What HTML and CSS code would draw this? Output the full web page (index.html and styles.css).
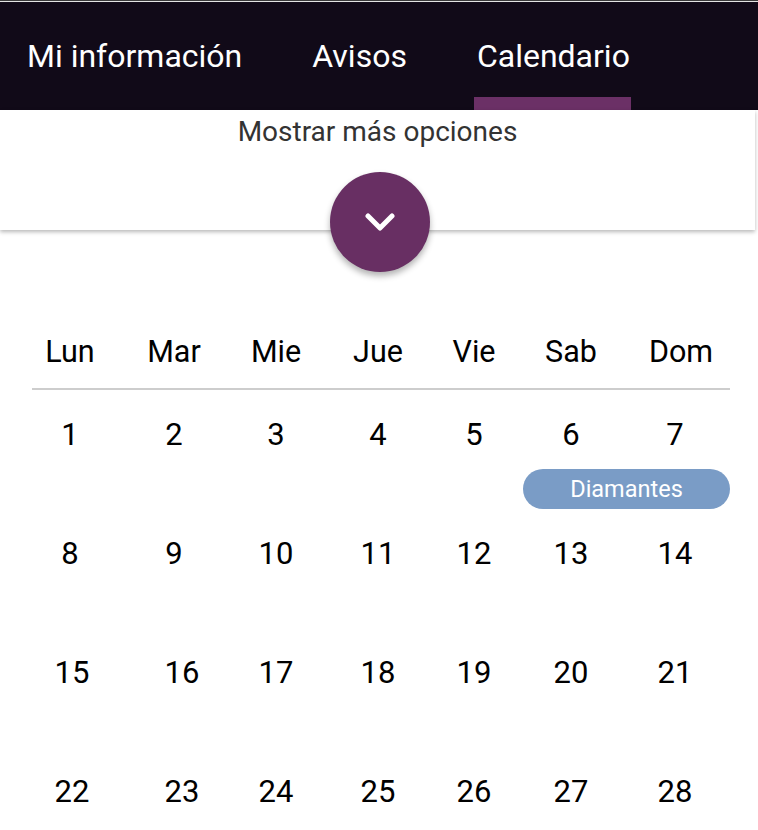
FILE: index.html
```html
<!DOCTYPE html>
<html lang="es">
<head>
<meta charset="utf-8">
<title>Calendario</title>
<link rel="stylesheet" href="styles.css">
</head>
<body>
<div class="frame-top"></div>
<header class="tabs">
  <div class="tab">Mi información</div>
  <div class="tab">Avisos</div>
  <div class="tab active">Calendario</div>
</header>
<section class="options">
  <div class="options-label">Mostrar más opciones</div>
  <button class="fab" aria-label="Mostrar más opciones">
    <svg width="30" height="20" viewBox="0 0 30 20"><path d="M3 3 L15 15 L27 3" fill="none" stroke="#fff" stroke-width="5" stroke-linecap="round" stroke-linejoin="round"/></svg>
  </button>
</section>
<main class="calendar">
  <div class="week head">
    <div>Lun</div><div>Mar</div><div>Mie</div><div>Jue</div><div>Vie</div><div>Sab</div><div>Dom</div>
  </div>
  <div class="week days">
    <div>1</div><div>2</div><div>3</div><div>4</div><div>5</div><div>6</div><div>7</div>
    <div class="event">Diamantes</div>
  </div>
  <div class="week days">
    <div>8</div><div>9</div><div>10</div><div>11</div><div>12</div><div>13</div><div>14</div>
  </div>
  <div class="week days wide">
    <div>15</div><div>16</div><div>17</div><div>18</div><div>19</div><div>20</div><div>21</div>
  </div>
  <div class="week days wide">
    <div>22</div><div>23</div><div>24</div><div>25</div><div>26</div><div>27</div><div>28</div>
  </div>
</main>
</body>
</html>
```
FILE: styles.css
```css
html, body {
  margin: 0;
  padding: 0;
  background: #fff;
  font-family: Roboto, "Liberation Sans", sans-serif;
  overflow: hidden;
}
.frame-top {
  height: 1px;
  border-top: 1px solid #3a3a3a;
  background: #e4e4e4;
}
.tabs {
  background: #110a18;
  height: 108px;
  display: flex;
  gap: 70px;
  padding-left: 27px;
  box-sizing: border-box;
}
.tab {
  color: #fff;
  font-size: 32px;
  line-height: 108px;
  position: relative;
}
.tab.active::after {
  content: "";
  position: absolute;
  left: -3px;
  right: -1px;
  bottom: 0;
  height: 13px;
  background: #6b3066;
}
.options {
  position: relative;
  height: 120px;
  width: 755px;
  background: #fff;
  box-shadow: 0 2px 4px rgba(0,0,0,0.28);
  text-align: center;
}
.options-label {
  padding-top: 6px;
  font-size: 28px;
  line-height: 32px;
  color: #333;
}
.fab {
  position: absolute;
  left: 330px;
  top: 62px;
  width: 100px;
  height: 100px;
  border-radius: 50%;
  border: none;
  background: #682f63;
  box-shadow: 0 4px 6px rgba(0,0,0,0.3);
  display: flex;
  align-items: center;
  justify-content: center;
  padding: 2px 0 0;
}
.calendar {
  margin: 0 0 0 32px;
  width: 698px;
  padding-top: 96px;
}
.week {
  display: grid;
  grid-template-columns: 76px 132px 72px 132px 60px 134px 92px;
  justify-items: center;
  color: #000;
}
.week.head {
  font-size: 30.5px;
  height: 52px;
  line-height: 52px;
  padding-bottom: 10px;
  border-bottom: 2px solid #cdcdcd;
}
.week.head > div:nth-child(7) { margin-left: -6px; }
.week.days {
  font-size: 31px;
  height: 119px;
  line-height: 30px;
  align-content: start;
}
.week.days > div:not(.event) {
  margin-top: 30px;
}
.week.days > div:nth-child(7) { margin-right: 18px; }
.week.days.wide > div:nth-child(2) { margin-left: 16px; }
.week.days.wide > div:nth-child(1) { margin-left: 4px; }
.event {
  grid-column: 6 / 8;
  grid-row: 2;
  justify-self: stretch;
  margin-left: 19px;
  margin-top: 19px;
  height: 40px;
  border-radius: 20px;
  background: #7a9cc6;
  color: #fff;
  font-size: 23.5px;
  line-height: 40px;
  text-align: center;
}
```
